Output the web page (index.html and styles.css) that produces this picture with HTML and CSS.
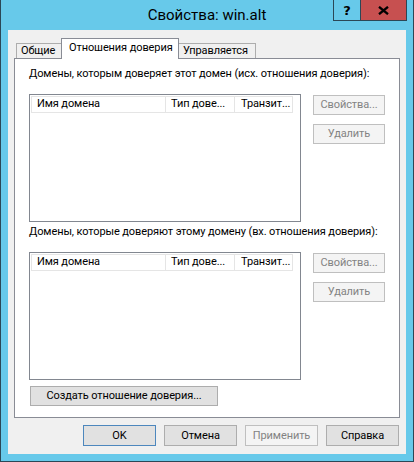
FILE: index.html
```html
<!DOCTYPE html>
<html lang="ru">
<head>
<meta charset="utf-8">
<title>Свойства: win.alt</title>
<link rel="stylesheet" href="styles.css">
</head>
<body>
<div class="window">
  <div class="titlebar">
    <div class="title">Свойства: win.alt</div>
    <div class="caption-buttons">
      <div class="cap-btn help">?</div>
      <div class="cap-btn close">
        <svg width="11" height="9" viewBox="0 0 11 9"><path d="M1 0.8 L10 8.2 M10 0.8 L1 8.2" stroke="#000" stroke-width="2.3" fill="none"/></svg>
      </div>
    </div>
  </div>
  <div class="client">
    <div class="tabs">
      <div class="tab tab-general">Общие</div>
      <div class="tab tab-active">Отношения доверия</div>
      <div class="tab tab-managed">Управляется</div>
    </div>
    <div class="panel">
      <div class="label">Домены, которым доверяет этот домен (исх. отношения доверия):</div>
      <div class="group">
        <div class="list">
          <div class="list-header">
            <div class="col col-name">Имя домена</div>
            <div class="col col-type">Тип дове...</div>
            <div class="col col-trans">Транзит...</div>
          </div>
        </div>
        <div class="side-buttons">
          <div class="btn disabled">Свойства...</div>
          <div class="btn disabled">Удалить</div>
        </div>
      </div>
      <div class="label label2">Домены, которые доверяют этому домену (вх. отношения доверия):</div>
      <div class="group">
        <div class="list">
          <div class="list-header">
            <div class="col col-name">Имя домена</div>
            <div class="col col-type">Тип дове...</div>
            <div class="col col-trans">Транзит...</div>
          </div>
        </div>
        <div class="side-buttons">
          <div class="btn disabled">Свойства...</div>
          <div class="btn disabled">Удалить</div>
        </div>
      </div>
      <div class="btn create">Создать отношение доверия...</div>
    </div>
    <div class="footer">
      <div class="btn fbtn default">OK</div>
      <div class="btn fbtn">Отмена</div>
      <div class="btn fbtn disabled">Применить</div>
      <div class="btn fbtn">Справка</div>
    </div>
  </div>
</div>
</body>
</html>
```
FILE: styles.css
```css
* { box-sizing: border-box; }
html, body { margin: 0; padding: 0; }
body {
  width: 414px;
  height: 462px;
  font-family: Roboto, "Liberation Sans", sans-serif;
  font-size: 11px;
  letter-spacing: -0.1px;
  color: #000;
  background: #67c9ea;
}
.window {
  width: 414px;
  height: 462px;
  background: #67c9ea;
  border: 1px solid #2b4756;
  border-top: none;
  padding: 0 7px 7px 7px;
  display: flex;
  flex-direction: column;
}
.titlebar {
  height: 30px;
  display: grid;
  grid-template-columns: 1fr auto;
  grid-template-rows: 30px;
}
.title {
  grid-row: 1;
  grid-column: 1 / -1;
  text-align: center;
  font-size: 15px;
  letter-spacing: 0;
  line-height: 30px;
  color: #000;
}
.caption-buttons {
  grid-row: 1;
  grid-column: 2;
  display: flex;
  align-items: flex-start;
  margin-right: -1px;
  height: 21px;
  border: 1px solid #2b4756;
  border-top: none;
}
.cap-btn {
  height: 20px;
  display: flex;
  align-items: center;
  justify-content: center;
}
.help {
  width: 27px;
  border-right: 1px solid #2b4756;
  font-weight: bold;
  font-size: 13px;
  letter-spacing: 0;
  font-family: "DejaVu Sans", sans-serif;
  background: #67c9ea;
}
.close {
  width: 45px;
  background: #c75050;
}
.client {
  flex: 1;
  background: #f0f0f0;
  padding: 8px 6px 0 6px;
  display: flex;
  flex-direction: column;
}
.tabs {
  display: flex;
  align-items: flex-end;
  height: 21px;
  padding-left: 2px;
  margin-bottom: -1px;
}
.tab {
  border: 1px solid #adadad;
  border-bottom: none;
  background: #f0f0f0;
  height: 15px;
  margin-bottom: 1px;
  line-height: 14px;
  padding-left: 4px;
  white-space: nowrap;
}
.tab-general { width: 46px; }
.tab-active {
  width: 118px;
  height: 21px;
  margin: 0 -1px 0 -1px;
  background: #fff;
  position: relative;
  z-index: 1;
  line-height: 18px;
  padding-left: 7px;
  border-color: #898c95;
}
.tab-managed { width: 78px; padding-left: 4px; }
.panel {
  height: 360px;
  background: #fff;
  border: 1px solid #898c95;
  padding: 7px 0 11px 14px;
  display: flex;
  flex-direction: column;
}
.label {
  height: 15px;
  line-height: 15px;
  white-space: nowrap;
}
.label2 { margin-top: 2px; }
.group {
  display: flex;
  margin-top: 13px;
  height: 128px;
}
.list {
  width: 272px;
  height: 128px;
  border: 1px solid #828790;
  padding: 1px;
}
.list-header {
  display: flex;
  height: 17px;
}
.col {
  border-top: 1px solid #e5e5e5;
  border-bottom: 1px solid #e5e5e5;
  border-right: 1px solid #e5e5e5;
  padding-left: 5px;
  line-height: 14px;
  white-space: nowrap;
  overflow: hidden;
}
.col-name { width: 135px; border-left: 1px solid #e5e5e5; }
.col-type { width: 69px; }
.col-trans { width: 58px; padding-left: 6px; }
.side-buttons {
  margin-left: 12px;
  margin-top: 1px;
  display: flex;
  flex-direction: column;
  gap: 9px;
}
.btn {
  height: 20px;
  width: 72px;
  border: 1px solid #adadad;
  background: #e1e1e1;
  display: flex;
  align-items: center;
  justify-content: center;
  white-space: nowrap;
  line-height: 18px;
}
.btn.disabled {
  border-color: #bfbfbf;
  background: #f4f4f4;
  color: #838383;
}
.create {
  margin-top: 6px;
  margin-left: 1px;
  width: 188px;
}
.footer {
  display: flex;
  justify-content: flex-end;
  gap: 8px;
  padding-right: 1px;
  margin-top: 7px;
}
.fbtn {
  width: 73px;
  height: 21px;
}
.fbtn.default {
  border-color: #4d87bd;
}
```
